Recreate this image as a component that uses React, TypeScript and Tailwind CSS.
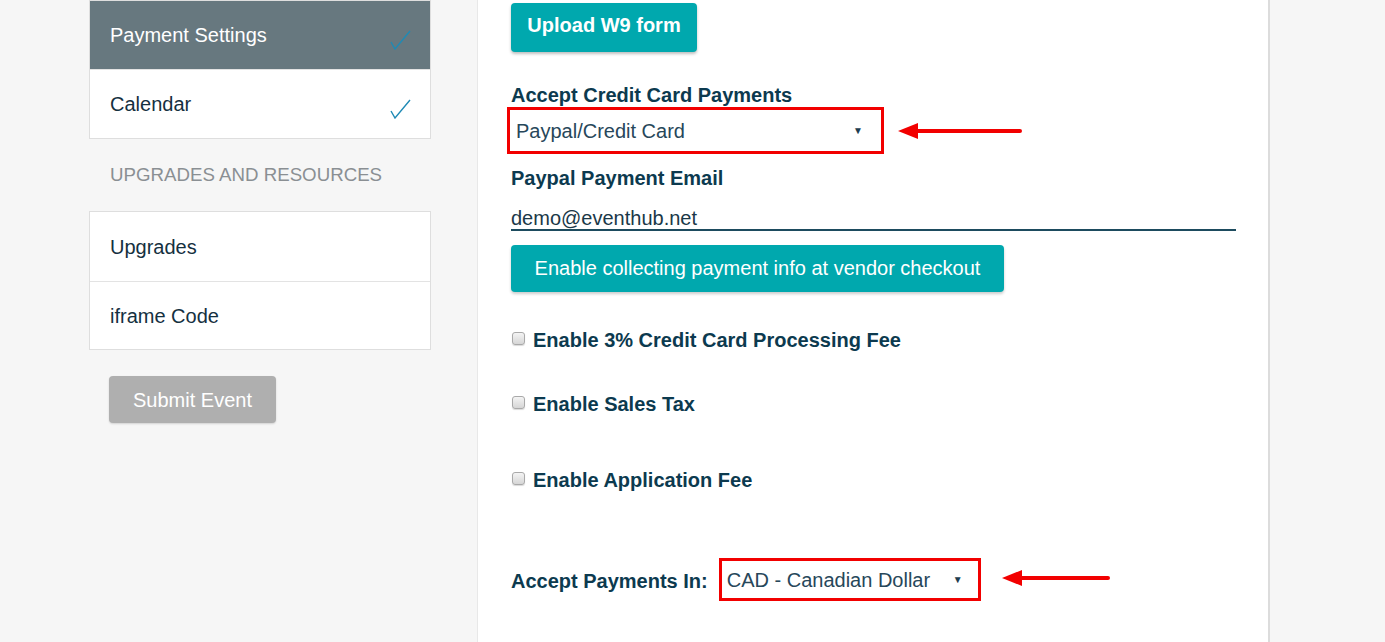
import React from "react";

function Check() {
  return (
    <svg width="22" height="20" viewBox="0 0 22 20" className="mt-[8px]">
      <polyline points="1,12 5,19 20,1" fill="none" stroke="#1f8ab5" strokeWidth="1.4" strokeLinejoin="miter" />
    </svg>
  );
}

function Arrow({ len }: { len: number }) {
  return (
    <svg width={len} height="18" viewBox={`0 0 ${len} 18`}>
      <polygon points={`0,9 20,1 20,17`} fill="#f20000" />
      <line x1="18" y1="9" x2={len - 2} y2="9" stroke="#f20000" strokeWidth="4" strokeLinecap="round" />
    </svg>
  );
}

function Box() {
  return (
    <div className="w-[13px] h-[13px] rounded-[3px] border border-[#a9a9a9] bg-linear-to-b from-[#f4f4f4] to-[#d6d6d6] shadow-[0_1px_1px_rgba(0,0,0,0.15)] shrink-0" />
  );
}

export default function App() {
  return (
    <div className="w-[1385px] h-[642px] overflow-hidden bg-[#f6f6f6] flex font-['Liberation_Sans',Arial,sans-serif]">
      {/* Sidebar */}
      <div className="ml-[89px] w-[342px] flex flex-col">
        <div className="border border-[#dedede] bg-white">
          <div className="h-[68px] bg-[#67787f] flex items-start justify-between pl-[20px] pr-[18px]">
            <span className="text-white text-[20px] leading-[22px] mt-[23px]">Payment Settings</span>
            <div className="mt-[21px]"><Check /></div>
          </div>
          <div className="h-[69px] border-t border-[#e3e3e3] flex items-start justify-between pl-[20px] pr-[18px]">
            <span className="text-[#15303f] text-[20px] leading-[22px] mt-[23px]">Calendar</span>
            <div className="mt-[21px]"><Check /></div>
          </div>
        </div>
        <div className="h-[72px] flex items-center pl-[21px] text-[#8a8f93] text-[18.7px] leading-[22px]">
          UPGRADES AND RESOURCES
        </div>
        <div className="border border-[#dedede] bg-white">
          <div className="h-[69px] flex items-center pl-[20px] text-[#15303f] text-[20px]">Upgrades</div>
          <div className="h-[68px] border-t border-[#e3e3e3] flex items-center pl-[20px] text-[#15303f] text-[20px]">iframe Code</div>
        </div>
        <div className="mt-[26px] ml-[20px] w-[167px] h-[47px] rounded-[4px] bg-[#afafaf] shadow-[0_1px_2px_rgba(0,0,0,0.15)] flex items-center justify-center text-white text-[20px]">
          Submit Event
        </div>
      </div>

      {/* Main panel */}
      <div className="ml-[46px] w-[793px] h-full bg-white border-l border-[#e8e8e8] border-r-2 border-r-[#dcdcdc] pl-[33px] pr-[32px] flex flex-col text-[#0c3a4f]">
        <div className="mt-[3px] w-[186px] h-[49px] rounded-[4px] bg-[#00a8ae] shadow-[0_2px_3px_rgba(0,0,0,0.25)] flex items-center justify-center text-white font-bold text-[20px] pb-[5px]">
          Upload W9 form
        </div>

        <div className="mt-[32px] h-[22px] leading-[22px] font-bold text-[20px]">Accept Credit Card Payments</div>
        <div className="mt-[1px] flex items-center">
          <div className="-ml-[4px] w-[377px] h-[47px] border-[3px] border-[#f20000] flex items-center justify-between pl-[6px] pr-[18px]">
            <span className="text-[#27475a] text-[20px]">Paypal/Credit Card</span>
            <span className="text-[#1d3d4f] text-[10px]">▼</span>
          </div>
          <div className="ml-[14px]"><Arrow len={124} /></div>
        </div>

        <div className="mt-[13px] h-[22px] leading-[22px] font-bold text-[20px]">Paypal Payment Email</div>
        <div className="mt-[14px] h-[28px] pt-[2px] border-b-2 border-[#1d4b5e] text-[20px] leading-[26px] text-[#1a3848]">
          demo@eventhub.net
        </div>

        <div className="mt-[14px] w-[493px] h-[47px] rounded-[4px] bg-[#00a8ae] shadow-[0_2px_3px_rgba(0,0,0,0.2)] flex items-center justify-center text-white text-[20px] pb-[2px]">
          Enable collecting payment info at vendor checkout
        </div>

        <div className="mt-[37px] h-[22px] flex items-center gap-[8px] pl-[1px]">
          <div className="-mt-[3px]"><Box /></div>
          <span className="font-bold text-[20px] leading-[22px]">Enable 3% Credit Card Processing Fee</span>
        </div>
        <div className="mt-[42px] h-[22px] flex items-center gap-[8px] pl-[1px]">
          <div className="-mt-[3px]"><Box /></div>
          <span className="font-bold text-[20px] leading-[22px]">Enable Sales Tax</span>
        </div>
        <div className="mt-[54px] h-[22px] flex items-center gap-[8px] pl-[1px]">
          <div className="-mt-[3px]"><Box /></div>
          <span className="font-bold text-[20px] leading-[22px]">Enable Application Fee</span>
        </div>

        <div className="mt-[67px] flex items-center">
          <span className="font-bold text-[20px] leading-[22px] mt-[2px]">Accept Payments In:</span>
          <div className="ml-[11px] w-[262px] h-[43px] border-[3px] border-[#f20000] flex items-center justify-between pl-[5px] pr-[15px]">
            <span className="text-[#27475a] text-[20px]">CAD - Canadian Dollar</span>
            <span className="text-[#1d3d4f] text-[10px]">▼</span>
          </div>
          <div className="ml-[21px] -mt-[4px]"><Arrow len={108} /></div>
        </div>
      </div>
    </div>
  );
}
